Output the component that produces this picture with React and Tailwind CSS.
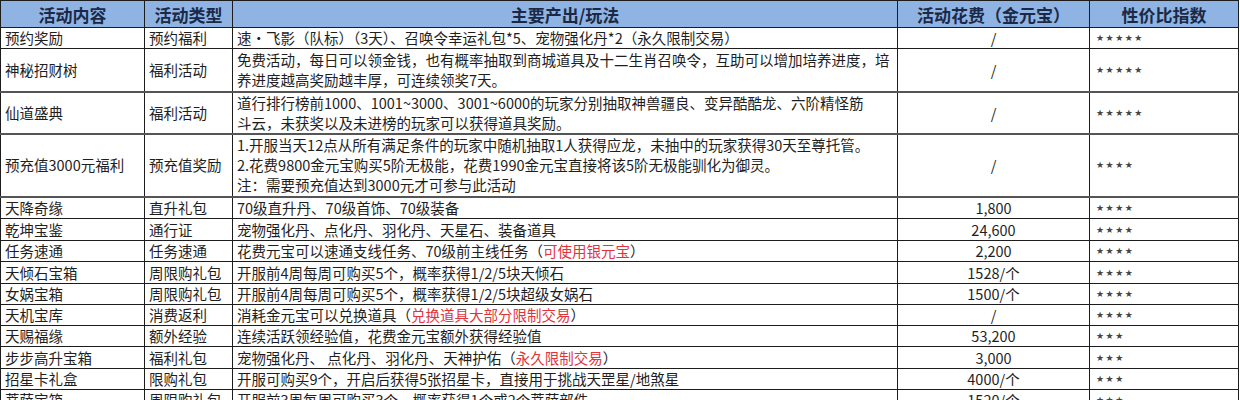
const FONT = { fontFamily: '"Noto Sans CJK SC", "Liberation Sans", sans-serif' }

const rows = [
  { name: '预约奖励', type: '预约福利', h: 'h-[21px]', lines: [['速·飞影（队标）（3天）、召唤令幸运礼包*5、宠物强化丹*2（永久限制交易）']], cost: '/', stars: 5 },
  {
    name: '神秘招财树', type: '福利活动', h: 'h-[43px]', thick: true,
    lines: [
      ['免费活动，每日可以领金钱，也有概率抽取到商城道具及十二生肖召唤令，互助可以增加培养进度，培'],
      ['养进度越高奖励越丰厚，可连续领奖7天。'],
    ],
    cost: '/', stars: 5,
  },
  {
    name: '仙道盛典', type: '福利活动', h: 'h-[42px]', thick: true,
    lines: [
      ['道行排行榜前1000、1001~3000、3001~6000的玩家分别抽取神兽疆良、变异酷酷龙、六阶精怪筋'],
      ['斗云，未获奖以及未进榜的玩家可以获得道具奖励。'],
    ],
    cost: '/', stars: 5,
  },
  {
    name: '预充值3000元福利', type: '预充值奖励', h: 'h-[63px]', thick: true,
    lines: [
      ['1.开服当天12点从所有满足条件的玩家中随机抽取1人获得应龙，未抽中的玩家获得30天至尊托管。'],
      ['2.花费9800金元宝购买5阶无极能，花费1990金元宝直接将该5阶无极能驯化为御灵。'],
      ['注：需要预充值达到3000元才可参与此活动'],
    ],
    cost: '/', stars: 4,
  },
  { name: '天降奇缘', type: '直升礼包', h: 'h-[22px]', lines: [['70级直升丹、70级首饰、70级装备']], cost: '1,800', stars: 4 },
  { name: '乾坤宝鉴', type: '通行证', h: 'h-[22px]', lines: [['宠物强化丹、点化丹、羽化丹、天星石、装备道具']], cost: '24,600', stars: 4 },
  { name: '任务速通', type: '任务速通', h: 'h-[21px]', lines: [['花费元宝可以速通支线任务、70级前主线任务（', '可使用银元宝', '）']], cost: '2,200', stars: 4 },
  { name: '天倾石宝箱', type: '周限购礼包', h: 'h-[22px]', lines: [['开服前4周每周可购买5个，概率获得1/2/5块天倾石']], cost: '1528/个', stars: 4 },
  { name: '女娲宝箱', type: '周限购礼包', h: 'h-[21px]', lines: [['开服前4周每周可购买5个，概率获得1/2/5块超级女娲石']], cost: '1500/个', stars: 4 },
  { name: '天机宝库', type: '消费返利', h: 'h-[21px]', lines: [['消耗金元宝可以兑换道具（', '兑换道具大部分限制交易', '）']], cost: '/', stars: 4 },
  { name: '天赐福缘', type: '额外经验', h: 'h-[21px]', lines: [['连续活跃领经验值，花费金元宝额外获得经验值']], cost: '53,200', stars: 3 },
  { name: '步步高升宝箱', type: '福利礼包', h: 'h-[22px]', lines: [['宠物强化丹、 点化丹、羽化丹、天神护佑（', '永久限制交易', '）']], cost: '3,000', stars: 3 },
  { name: '招星卡礼盒', type: '限购礼包', h: 'h-[21px]', lines: [['开服可购买9个，开启后获得5张招星卡，直接用于挑战天罡星/地煞星']], cost: '4000/个', stars: 3 },
  { name: '菩萨宝箱', type: '周限购礼包', h: 'h-[21px]', lines: [['开服前3周每周可购买3个，概率获得1个或2个菩萨部件']], cost: '1520/个', stars: 3 },
]

function Line({ parts }) {
  return (
    <div className="whitespace-nowrap h-[20px] leading-[20px] overflow-visible">
      {parts.map((p, i) => (
        <span key={i} className={i === 1 ? 'text-[#e2333b]' : ''}>
          {p}
        </span>
      ))}
    </div>
  )
}

function Stars({ n }) {
  return (
    <div className="h-[18px] leading-[18px] text-[9px] tracking-[1.5px] text-[#444] whitespace-nowrap" style={{ fontFamily: '"DejaVu Sans", sans-serif' }}>
      {'★'.repeat(n)}
    </div>
  )
}

export default function App() {
  const cell = 'border border-[#1c1c1c] px-[4px] py-0 align-middle'
  const head = 'border border-[#1c1c1c] bg-[#8fb4e3] text-[#1b2947] font-bold text-[17px] leading-[25px] text-center h-[27px] p-0'
  return (
    <div className="h-[400px] w-[1240px] overflow-hidden bg-white" style={FONT}>
      <table className="table-fixed border-collapse w-[1238px] text-[14.5px] leading-[20px] text-[#1e1e1e]">
        <colgroup>
          <col className="w-[144px]" />
          <col className="w-[88px]" />
          <col className="w-[665px]" />
          <col className="w-[192px]" />
          <col className="w-[149px]" />
        </colgroup>
        <thead>
          <tr>
            <th className={head}>活动内容</th>
            <th className={head}>活动类型</th>
            <th className={head}>主要产出/玩法</th>
            <th className={head}>活动花费（金元宝）</th>
            <th className={head}>性价比指数</th>
          </tr>
        </thead>
        <tbody>
          {rows.map((r) => (
            <tr key={r.name} className={`${r.h} ${r.thick ? 'border-b-2 border-b-[#555]' : ''}`}>
              <td className={cell}>
                <Line parts={[r.name]} />
              </td>
              <td className={cell}>
                <Line parts={[r.type]} />
              </td>
              <td className={cell}>
                {r.lines.map((l, i) => (
                  <Line key={i} parts={l} />
                ))}
              </td>
              <td className={`${cell} text-center`}>
                <Line parts={[r.cost]} />
              </td>
              <td className={`${cell} pl-[6px]`}>
                <Stars n={r.stars} />
              </td>
            </tr>
          ))}
        </tbody>
      </table>
    </div>
  )
}
